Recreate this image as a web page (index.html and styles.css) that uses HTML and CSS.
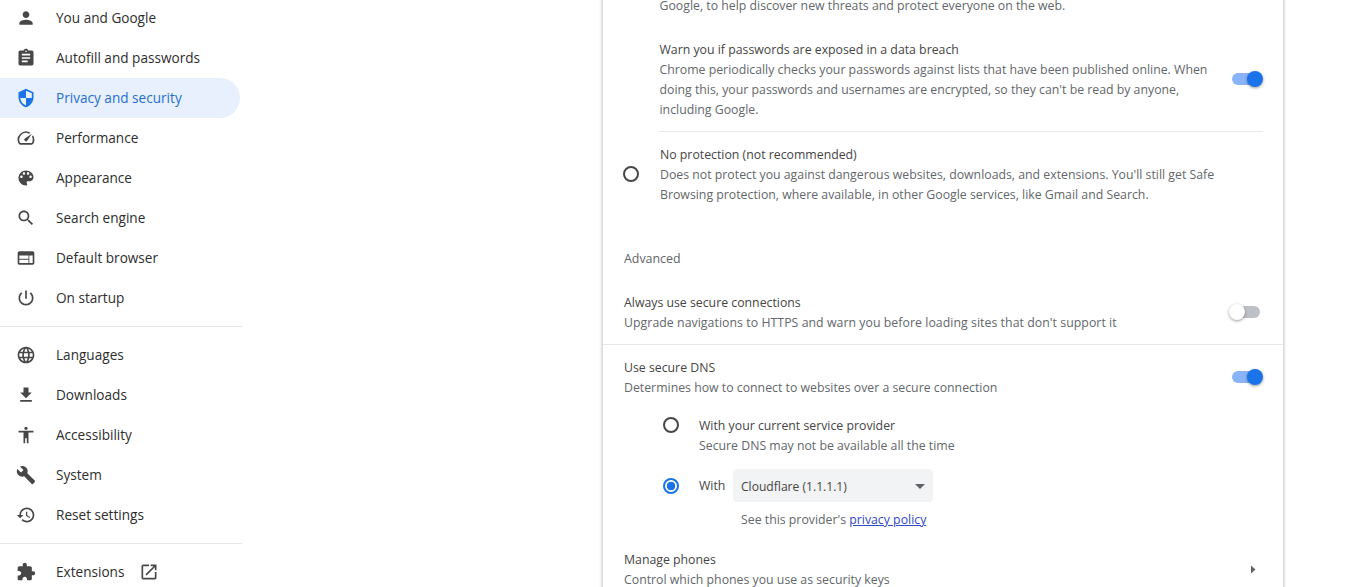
FILE: index.html
```html
<!DOCTYPE html>
<html lang="en">
<head>
<meta charset="utf-8">
<title>Settings - Privacy and security</title>
<link rel="stylesheet" href="styles.css">
</head>
<body>
<div class="page">
  <nav class="sidebar">
    <a class="nav-item"><svg class="nav-icon" viewBox="0 0 24 24"><path d="M12 12c2.21 0 4-1.79 4-4s-1.79-4-4-4-4 1.79-4 4 1.79 4 4 4zm0 2c-2.67 0-8 1.34-8 4v2h16v-2c0-2.66-5.33-4-8-4z"/></svg><span>You and Google</span></a>
    <a class="nav-item"><svg class="nav-icon" viewBox="0 0 24 24"><path d="M19 3h-4.18C14.4 1.84 13.3 1 12 1c-1.3 0-2.4.84-2.82 2H5c-1.1 0-2 .9-2 2v14c0 1.1.9 2 2 2h14c1.1 0 2-.9 2-2V5c0-1.1-.9-2-2-2zm-7 0c.55 0 1 .45 1 1s-.45 1-1 1-1-.45-1-1 .45-1 1-1zm2 14H7v-2h7v2zm3-4H7v-2h10v2zm0-4H7V7h10v2z"/></svg><span>Autofill and passwords</span></a>
    <a class="nav-item active"><svg class="nav-icon" viewBox="0 0 24 24"><path transform="matrix(-1 0 0 1 24 0)" d="M12 1L3 5v6c0 5.55 3.84 10.74 9 12 5.16-1.26 9-6.45 9-12V5l-9-4zm0 10.99h7c-.53 4.12-3.28 7.79-7 8.94V12H5V6.3l7-3.11v8.8z"/></svg><span>Privacy and security</span></a>
    <a class="nav-item"><svg class="nav-icon" viewBox="0 0 24 24"><path d="M20.38 8.57l-1.23 1.85a8 8 0 0 1-.22 7.58H5.07A8 8 0 0 1 15.58 6.85l1.85-1.23A10 10 0 0 0 3.35 19a2 2 0 0 0 1.72 1h13.85a2 2 0 0 0 1.74-1 10 10 0 0 0-.27-10.44zm-9.79 6.84a2 2 0 0 0 2.83 0l5.66-8.49-8.49 5.66a2 2 0 0 0 0 2.83z"/></svg><span>Performance</span></a>
    <a class="nav-item"><svg class="nav-icon" viewBox="0 0 24 24"><path d="M12 3c-4.97 0-9 4.03-9 9s4.03 9 9 9c.83 0 1.5-.67 1.5-1.5 0-.39-.15-.74-.39-1.01-.23-.26-.38-.61-.38-.99 0-.83.67-1.5 1.5-1.5H16c2.76 0 5-2.24 5-5 0-4.42-4.03-8-9-8zm-5.5 9c-.83 0-1.5-.67-1.5-1.5S5.67 9 6.5 9 8 9.67 8 10.5 7.33 12 6.5 12zm3-4C8.67 8 8 7.33 8 6.5S8.67 5 9.5 5s1.5.67 1.5 1.5S10.33 8 9.5 8zm5 0c-.83 0-1.5-.67-1.5-1.5S13.67 5 14.5 5s1.5.67 1.5 1.5S15.33 8 14.5 8zm3 4c-.83 0-1.5-.67-1.5-1.5S16.67 9 17.5 9s1.5.67 1.5 1.5-.67 1.5-1.5 1.5z"/></svg><span>Appearance</span></a>
    <a class="nav-item"><svg class="nav-icon" viewBox="0 0 24 24"><path d="M15.5 14h-.79l-.28-.27C15.41 12.59 16 11.11 16 9.5 16 5.91 13.09 3 9.5 3S3 5.91 3 9.5 5.91 16 9.5 16c1.61 0 3.09-.59 4.23-1.57l.27.28v.79l5 4.99L20.49 19l-4.99-5zm-6 0C7.01 14 5 11.99 5 9.5S7.01 5 9.5 5 14 7.01 14 9.5 11.99 14 9.5 14z"/></svg><span>Search engine</span></a>
    <a class="nav-item"><svg class="nav-icon" viewBox="0 0 24 24"><path d="M20 4H4c-1.1 0-1.99.9-1.99 2L2 18c0 1.1.9 2 2 2h16c1.1 0 2-.9 2-2V6c0-1.1-.9-2-2-2zm-5 14H4v-4h11v4zm0-5H4V9h11v4zm5 5h-4V9h4v9z"/></svg><span>Default browser</span></a>
    <a class="nav-item"><svg class="nav-icon" viewBox="0 0 24 24"><path d="M13 3h-2v10h2V3zm4.83 2.17l-1.42 1.42C17.99 7.86 19 9.81 19 12c0 3.87-3.13 7-7 7s-7-3.13-7-7c0-2.19 1.01-4.14 2.58-5.42L6.17 5.17C4.23 6.82 3 9.26 3 12c0 4.97 4.03 9 9 9s9-4.03 9-9c0-2.74-1.23-5.18-3.17-6.83z"/></svg><span>On startup</span></a>
    <div class="nav-sep"></div>
    <a class="nav-item"><svg class="nav-icon" viewBox="0 0 24 24"><path d="M11.99 2C6.47 2 2 6.48 2 12s4.47 10 9.99 10C17.52 22 22 17.52 22 12S17.52 2 11.99 2zm6.93 6h-2.95c-.32-1.25-.78-2.45-1.38-3.56 1.84.63 3.37 1.91 4.33 3.56zM12 4.04c.83 1.2 1.48 2.53 1.91 3.96h-3.82c.43-1.43 1.08-2.76 1.91-3.96zM4.26 14C4.1 13.36 4 12.69 4 12s.1-1.36.26-2h3.38c-.08.66-.14 1.32-.14 2 0 .68.06 1.34.14 2H4.26zm.82 2h2.95c.32 1.25.78 2.45 1.38 3.56-1.84-.63-3.37-1.9-4.33-3.56zm2.95-8H5.08c.96-1.66 2.49-2.93 4.33-3.56C8.81 5.55 8.35 6.75 8.03 8zM12 19.96c-.83-1.2-1.48-2.53-1.91-3.96h3.82c-.43 1.43-1.08 2.76-1.91 3.96zM14.34 14H9.66c-.09-.66-.16-1.32-.16-2 0-.68.07-1.35.16-2h4.68c.09.65.16 1.32.16 2 0 .68-.07 1.34-.16 2zm.25 5.56c.6-1.11 1.06-2.31 1.38-3.56h2.95c-.96 1.65-2.49 2.93-4.33 3.56zM16.36 14c.08-.66.14-1.32.14-2 0-.68-.06-1.34-.14-2h3.38c.16.64.26 1.31.26 2s-.1 1.36-.26 2h-3.38z"/></svg><span>Languages</span></a>
    <a class="nav-item"><svg class="nav-icon" viewBox="0 0 24 24"><path d="M19 9h-4V3H9v6H5l7 7 7-7zM5 18v2h14v-2H5z"/></svg><span>Downloads</span></a>
    <a class="nav-item"><svg class="nav-icon" viewBox="0 0 24 24"><path d="M12 2c1.1 0 2 .9 2 2s-.9 2-2 2-2-.9-2-2 .9-2 2-2zm9 7h-6v13h-2v-6h-2v6H9V9H3V7h18v2z"/></svg><span>Accessibility</span></a>
    <a class="nav-item"><svg class="nav-icon" viewBox="0 0 24 24"><path d="M22.7 19l-9.1-9.1c.9-2.3.4-5-1.5-6.9-2-2-5-2.4-7.4-1.3L9 6 6 9 1.6 4.7C.4 7.1.9 10.1 2.9 12.1c1.9 1.9 4.6 2.4 6.9 1.5l9.1 9.1c.4.4 1 .4 1.4 0l2.3-2.3c.5-.4.5-1.1.1-1.4z"/></svg><span>System</span></a>
    <a class="nav-item"><svg class="nav-icon" viewBox="0 0 24 24"><path d="M13 3c-4.97 0-9 4.03-9 9H1l3.89 3.89.07.14L9 12H6c0-3.87 3.13-7 7-7s7 3.13 7 7-3.13 7-7 7c-1.93 0-3.68-.79-4.94-2.06l-1.42 1.42C8.27 19.99 10.51 21 13 21c4.97 0 9-4.03 9-9s-4.03-9-9-9zm-1 5v5l4.28 2.54.72-1.21-3.5-2.08V8H12z"/></svg><span>Reset settings</span></a>
    <div class="nav-sep"></div>
    <a class="nav-item"><svg class="nav-icon" viewBox="0 0 24 24"><path d="M20.5 11H19V7c0-1.1-.9-2-2-2h-4V3.5C13 2.12 11.88 1 10.5 1S8 2.12 8 3.5V5H4c-1.1 0-1.99.9-1.99 2v3.8H3.5c1.49 0 2.7 1.21 2.7 2.7s-1.21 2.7-2.7 2.7H2V20c0 1.1.9 2 2 2h3.8v-1.5c0-1.49 1.21-2.7 2.7-2.7 1.49 0 2.7 1.21 2.7 2.7V22H17c1.1 0 2-.9 2-2v-4h1.5c1.38 0 2.5-1.12 2.5-2.5S21.88 11 20.5 11z"/></svg><span>Extensions</span><svg class="ext-icon" viewBox="0 0 24 24"><path d="M19 19H5V5h7V3H5c-1.11 0-2 .9-2 2v14c0 1.1.89 2 2 2h14c1.1 0 2-.9 2-2v-7h-2v7zM14 3v2h3.59l-9.83 9.83 1.41 1.41L19 6.41V10h2V3h-7z"/></svg></a>
  </nav>
  <main class="card">
    <div class="nested">
      <div class="text">
        <p class="sub">Google, to help discover new threats and protect everyone on the web.</p>
      </div>
      <div class="row nested-row">
        <div class="text">
          <p class="label">Warn you if passwords are exposed in a data breach</p>
          <p class="sub">Chrome periodically checks your passwords against lists that have been published online. When doing this, your passwords and usernames are encrypted, so they can't be read by anyone, including Google.</p>
        </div>
        <span class="toggle on"></span>
      </div>
    </div>
    <div class="radio-row">
      <span class="radio"></span>
      <div class="text">
        <p class="label">No protection (not recommended)</p>
        <p class="sub">Does not protect you against dangerous websites, downloads, and extensions. You'll still get Safe Browsing protection, where available, in other Google services, like Gmail and Search.</p>
      </div>
    </div>
    <h2 class="heading">Advanced</h2>
    <div class="row plain">
      <div class="text">
        <p class="label">Always use secure connections</p>
        <p class="sub">Upgrade navigations to HTTPS and warn you before loading sites that don't support it</p>
      </div>
      <span class="toggle"></span>
    </div>
    <div class="row dns">
      <div class="text">
        <p class="label">Use secure DNS</p>
        <p class="sub">Determines how to connect to websites over a secure connection</p>
      </div>
      <span class="toggle on"></span>
    </div>
    <div class="dns-options">
      <div class="dns-option">
        <span class="radio"></span>
        <div class="text">
          <p class="label">With your current service provider</p>
          <p class="sub">Secure DNS may not be available all the time</p>
        </div>
      </div>
      <div class="dns-option custom">
        <span class="radio checked"></span>
        <span class="label">With</span>
        <div class="select"><span>Cloudflare (1.1.1.1)</span><i class="caret"></i></div>
      </div>
      <p class="sub policy">See this provider's <a class="link">privacy policy</a></p>
    </div>
    <div class="row phones">
      <div class="text">
        <p class="label">Manage phones</p>
        <p class="sub">Control which phones you use as security keys</p>
      </div>
      <svg class="arrow" viewBox="0 0 20 20"><path d="M8 6.5l4.5 4-4.5 4z"/></svg>
    </div>
  </main>
</div>
</body>
</html>
```
FILE: styles.css
```css
* { box-sizing: border-box; }
html, body { margin: 0; height: 100%; overflow: hidden; background: #fff; }
body { font-family: "Open Sans", "Noto Sans", sans-serif; font-size: 12.3px; color: #1f1f1f; }
p, h2 { margin: 0; }

.page { display: flex; align-items: flex-start; height: 587px; overflow: hidden; }

.sidebar { width: 242px; flex: none; margin-top: -2px; }
.nav-item { display: flex; align-items: center; height: 40px; width: 240px; padding-left: 16px; border-radius: 0 20px 20px 0; color: #2e2e2e; font-size: 13.6px; }
.nav-item span { padding-bottom: 2px; }
.nav-item.active { background: #e8f0fe; color: #1f6fd0; }
.nav-icon { width: 20px; height: 20px; margin-right: 20px; fill: #474747; flex: none; }
.active .nav-icon { fill: #1a73e8; }
.ext-icon { width: 20px; height: 20px; margin-left: 15px; fill: #474747; }
.nav-sep { height: 1px; width: 242px; background: #e6e6e6; margin: 8px 0; }

.card { width: 680px; margin-left: 361px; margin-top: -5px; background: #fff; box-shadow: 0 0 3px 1px rgba(60,64,67,.3); flex: none; padding-bottom: 40px; }
.text { padding: 1px 0 0 1px; margin-bottom: -1px; }
.label { color: #454545; line-height: 20px; }
.sub { color: #63676b; line-height: 20px; }

.nested { margin-left: 56px; padding-right: 20px; }
.nested .text { padding-left: 0.5px; }
.row { display: flex; align-items: center; justify-content: space-between; }
.nested-row { padding: 24px 0 12px; border-bottom: 1px solid #e8e8e8; }
.nested-row .text { width: 560px; }

.radio-row { display: flex; align-items: center; padding: 12px 20px 0 20px; }
.radio-row .radio { margin-right: 20px; }
.radio-row .text { width: 590px; }

.radio { display: block; width: 16px; height: 16px; border: 2px solid #474747; border-radius: 50%; flex: none; background: #fff; }
.radio.checked { border-color: #1a73e8; background: radial-gradient(circle, #1a73e8 0 4px, #fff 4.6px); }

.heading { font-size: 12.4px; font-weight: 500; color: #5f6368; line-height: 20px; padding: 45px 20px 0 21px; }

.plain { padding: 23px 20px 12px; border-bottom: 1px solid #e8e8e8; }
.plain .sub { letter-spacing: 0.05px; }
.dns { padding: 12px 20px 0; }
.phones { padding: 19px 20px 0; }

.toggle { position: relative; display: block; width: 28px; height: 12px; margin-right: 3px; border-radius: 6px; background: #bdc1c6; flex: none; }
.toggle::after { content: ""; position: absolute; top: -2px; left: -3px; width: 16px; height: 16px; border-radius: 50%; background: #fff; box-shadow: 0 1px 3px rgba(0,0,0,.4); }
.toggle.on { background: #8ab4f8; }
.toggle.on::after { left: 15px; background: #1a73e8; }

.dns-options { padding: 18px 0 0 60px; }
.dns-option { display: flex; align-items: flex-start; }
.dns-option .radio { margin: 2px 20px 0 0; }
.dns-option .text { padding-left: 0; }
.custom { align-items: center; height: 33px; margin-top: 14px; }
.custom .radio { margin-top: 0; }
.custom .label { width: 34px; padding-top: 1px; }
.select { display: flex; align-items: center; justify-content: space-between; width: 200px; height: 33px; padding: 1px 8px 0; border-radius: 4px; background: #f1f3f4; color: #454545; font-size: 12.1px; }
.caret { width: 0; height: 0; border-left: 5px solid transparent; border-right: 5px solid transparent; border-top: 5px solid #5f6368; }
.policy { padding: 8px 0 0 78px; }
.link { color: #2f49c8; text-decoration: underline; }
.arrow { width: 20px; height: 20px; fill: #5f6368; }
```
